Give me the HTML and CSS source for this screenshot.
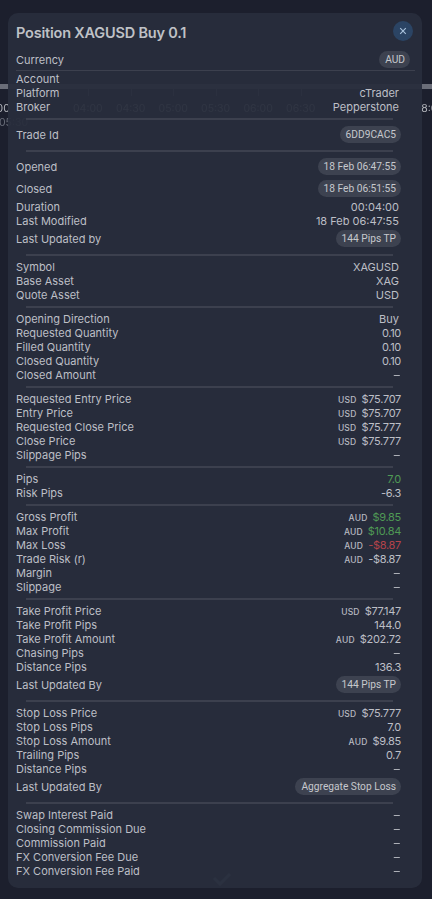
FILE: index.html
```html
<!DOCTYPE html>
<html lang="en">
<head>
<meta charset="utf-8">
<title>Position XAGUSD Buy 0.1</title>
<link rel="stylesheet" href="styles.css">
</head>
<body>
<div class="backdrop">
  <div class="band"></div>
  <div class="ticks"></div>
  <div class="times">
    <span class="edge">8:00</span><span>04:00</span><span>04:30</span><span>05:00</span><span>05:30</span><span>06:00</span><span>06:30</span><span class="edge end">8:00</span>
  </div>
  <div class="bg-time">05:30</div>
  <svg class="bg-mark" viewBox="0 0 20 14" width="20" height="14"><path d="M2 6l6 6 10-10"/></svg>
</div>
<main class="modal">
  <header class="head">
    <h1>Position XAGUSD Buy 0.1</h1>
    <button class="close" aria-label="Close"><svg viewBox="0 0 10 10" width="8" height="8"><path d="M1.5 1.5l7 7M8.5 1.5l-7 7"/></svg></button>
  </header>
  <div class="row chip-row first"><span>Currency</span><span class="chip">AUD</span></div>
  <hr class="wide">
  <div class="row account"><span>Account</span><span></span></div>
  <div class="row"><span>Platform</span><span class="val">cTrader</span></div>
  <div class="row"><span>Broker</span><span class="val">Pepperstone</span></div>
  <hr>
  <div class="row chip-row"><span>Trade Id</span><span class="chip">6DD9CAC5</span></div>
  <hr>
  <div class="row chip-row"><span>Opened</span><span class="chip">18 Feb 06:47:55</span></div>
  <div class="row chip-row"><span>Closed</span><span class="chip">18 Feb 06:51:55</span></div>
  <div class="row"><span>Duration</span><span class="val">00:04:00</span></div>
  <div class="row"><span>Last Modified</span><span class="val">18 Feb 06:47:55</span></div>
  <div class="row chip-row"><span>Last Updated by</span><span class="chip">144 Pips TP</span></div>
  <hr>
  <div class="row"><span>Symbol</span><span class="val">XAGUSD</span></div>
  <div class="row"><span>Base Asset</span><span class="val">XAG</span></div>
  <div class="row"><span>Quote Asset</span><span class="val">USD</span></div>
  <hr>
  <div class="row"><span>Opening Direction</span><span class="val">Buy</span></div>
  <div class="row"><span>Requested Quantity</span><span class="val num">0.10</span></div>
  <div class="row"><span>Filled Quantity</span><span class="val num">0.10</span></div>
  <div class="row"><span>Closed Quantity</span><span class="val num">0.10</span></div>
  <div class="row"><span>Closed Amount</span><span class="val dash">-</span></div>
  <hr>
  <div class="row"><span>Requested Entry Price</span><span class="val num"><small>USD</small>$75.707</span></div>
  <div class="row"><span>Entry Price</span><span class="val num"><small>USD</small>$75.707</span></div>
  <div class="row"><span>Requested Close Price</span><span class="val num"><small>USD</small>$75.777</span></div>
  <div class="row"><span>Close Price</span><span class="val num"><small>USD</small>$75.777</span></div>
  <div class="row"><span>Slippage Pips</span><span class="val dash">-</span></div>
  <hr>
  <div class="row"><span>Pips</span><span class="val num green">7.0</span></div>
  <div class="row"><span>Risk Pips</span><span class="val num">-6.3</span></div>
  <hr>
  <div class="row"><span>Gross Profit</span><span class="val num"><small>AUD</small><b class="green">$9.85</b></span></div>
  <div class="row"><span>Max Profit</span><span class="val num"><small>AUD</small><b class="green">$10.84</b></span></div>
  <div class="row"><span>Max Loss</span><span class="val num"><small>AUD</small><b class="red">-$8.87</b></span></div>
  <div class="row"><span>Trade Risk (r)</span><span class="val num"><small>AUD</small>-$8.87</span></div>
  <div class="row"><span>Margin</span><span class="val dash">-</span></div>
  <div class="row"><span>Slippage</span><span class="val dash">-</span></div>
  <hr>
  <div class="row"><span>Take Profit Price</span><span class="val num"><small>USD</small>$77.147</span></div>
  <div class="row"><span>Take Profit Pips</span><span class="val num">144.0</span></div>
  <div class="row"><span>Take Profit Amount</span><span class="val num"><small>AUD</small>$202.72</span></div>
  <div class="row"><span>Chasing Pips</span><span class="val dash">-</span></div>
  <div class="row"><span>Distance Pips</span><span class="val num">136.3</span></div>
  <div class="row chip-row"><span>Last Updated By</span><span class="chip">144 Pips TP</span></div>
  <hr>
  <div class="row"><span>Stop Loss Price</span><span class="val num"><small>USD</small>$75.777</span></div>
  <div class="row"><span>Stop Loss Pips</span><span class="val num">7.0</span></div>
  <div class="row"><span>Stop Loss Amount</span><span class="val num"><small>AUD</small>$9.85</span></div>
  <div class="row"><span>Trailing Pips</span><span class="val num">0.7</span></div>
  <div class="row"><span>Distance Pips</span><span class="val dash">-</span></div>
  <div class="row chip-row"><span>Last Updated By</span><span class="chip">Aggregate Stop Loss</span></div>
  <hr>
  <div class="row"><span>Swap Interest Paid</span><span class="val dash">-</span></div>
  <div class="row"><span>Closing Commission Due</span><span class="val dash">-</span></div>
  <div class="row"><span>Commission Paid</span><span class="val dash">-</span></div>
  <div class="row"><span>FX Conversion Fee Due</span><span class="val dash">-</span></div>
  <div class="row"><span>FX Conversion Fee Paid</span><span class="val dash">-</span></div>
</main>
</body>
</html>
```
FILE: styles.css
```css
* { box-sizing: border-box; }
html, body { margin: 0; height: 899px; overflow: hidden; }
body {
  background: #1c1f2d;
  color: #bdbfc6;
  font-family: "Inter", "Noto Sans", sans-serif;
  font-size: 11px;
  line-height: 14px;
  padding: 13px 10px 0 8px;
  position: relative;
}
.backdrop { position: absolute; inset: 0; filter: blur(0.7px); overflow: hidden; }
.band { position: absolute; left: 0; right: 0; top: 84px; height: 5px; background: #6a6d78; }
.ticks {
  position: absolute; left: 88px; width: 256px; top: 89px; height: 7px;
  background: repeating-linear-gradient(90deg, #6a6d78 0 1px, transparent 1px 42.6px);
}
.times {
  position: absolute; left: 0; right: 0; top: 102px;
  display: flex; gap: 13.2px; padding-left: 73px;
  color: #b5b7bd; font-size: 10.5px;
}
.edge { position: absolute; left: -13px; }
.edge.end { left: auto; right: -12px; }
.bg-time { position: absolute; left: -1px; top: 116px; color: #6a6e7a; font-size: 10.5px; }
.bg-mark { position: absolute; left: 212px; top: 872px; }
.bg-mark path { stroke: #6a7084; stroke-width: 3; fill: none; }
.modal {
  position: relative;
  width: 414px;
  height: 875px;
  background: rgba(40, 45, 60, 0.95);
  border-radius: 10px;
  padding: 6px 7px 0 8px;
}
.head { display: flex; justify-content: space-between; align-items: center; height: 28px; }
h1 { margin: 0; font-size: 14.5px; font-weight: 600; color: #bfc1c6; line-height: 28px; letter-spacing: -0.2px; }
.close {
  width: 20px; height: 20px; border-radius: 50%; border: 0; padding: 0;
  background: #2b4464; display: flex; align-items: center; justify-content: center;
  margin: -4px 2px 0 0;
}
.close path { stroke: #a9c2dc; stroke-width: 1.4; fill: none; }
.row { display: flex; justify-content: space-between; align-items: center; height: 14px; padding-right: 16px; }
.account { height: 15px; }
.chip-row { height: 22px; padding-right: 14px; }
.first { height: 20px; margin-top: 3px; padding-right: 5px; }
.chip {
  display: inline-block;
  background: #3d4250;
  color: #c6c8cd;
  font-family: "Roboto", sans-serif;
  font-size: 10.2px;
  line-height: 17px;
  height: 17px;
  padding: 0 5px 0 6px;
  border-radius: 9px;
  margin-top: -1px;
}
.val { color: #bdbfc6; display: inline-flex; align-items: baseline; }
.num { margin-right: -2px; letter-spacing: -0.3px; }
.dash { margin-right: -2px; transform: scaleX(1.7); transform-origin: right center; }
small { font-size: 8.5px; font-weight: 500; margin-right: 5px; color: #b8bac1; letter-spacing: 0.2px; }
b { font-weight: 400; }
.green { color: #4f9a55; }
.red { color: #b5434a; }
hr { border: 0; height: 2px; background: #3c404e; margin: 4px 22px 4px 10px; }
hr.wide { height: 1px; background: #3c404e; margin: 0; }
```
